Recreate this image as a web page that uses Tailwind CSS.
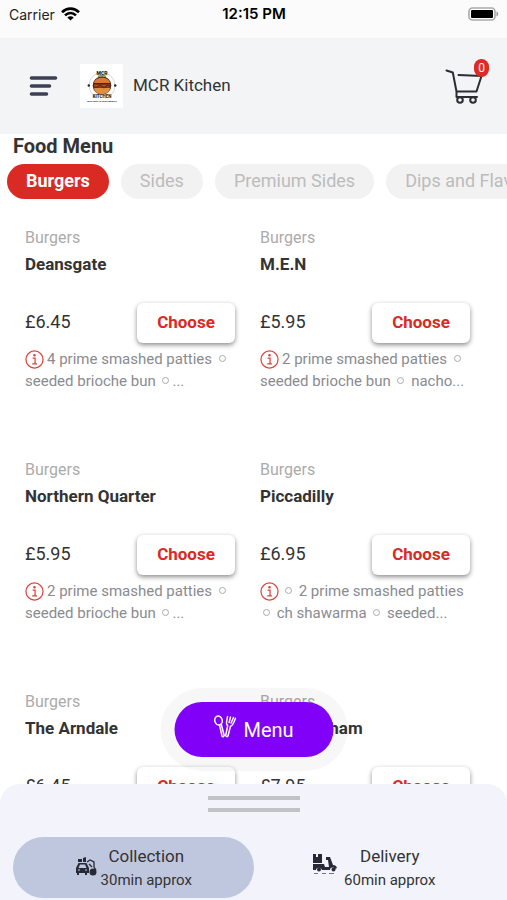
<!DOCTYPE html>
<html lang="en">
<head>
<meta charset="utf-8">
<meta name="viewport" content="width=device-width, initial-scale=1">
<title>MCR Kitchen</title>
<script src="https://cdn.jsdelivr.net/npm/@tailwindcss/browser@4"></script>
</head>
<body class="bg-white font-['Roboto','Liberation_Sans',sans-serif] text-[#333]">
<svg class="hidden" aria-hidden="true">
  <symbol id="info" viewBox="0 0 20 20"><circle cx="10" cy="10" r="9" fill="none" stroke="currentColor" stroke-width="1.3"/><circle cx="10" cy="5.6" r="1.3" fill="currentColor"/><path d="M8 8.5h2.6v6M7.6 14.6h5" fill="none" stroke="currentColor" stroke-width="1.3"/></symbol>
</svg>
<div class="flex h-screen flex-col overflow-hidden">
  <div class="grid h-[38px] shrink-0 grid-cols-3 items-center bg-[#fbfbfb] pr-2 pb-[10px] pl-[9px] font-['Inter','Roboto',sans-serif] text-[14px] text-black">
    <div class="flex items-center gap-[6px]"><span class="text-[#222]">Carrier</span>
      <svg class="h-[14px] w-[19px]" viewBox="0 0 19 14" fill="none" stroke="#000" stroke-width="2.6"><path d="M1 5.2C6 .4 13 .4 18 5.2M4 8.4c3.300-3.100 7.700-3.100 11 0"/><path d="M9.500 13.500 6.300 10.400c1.900-1.700 4.500-1.700 6.400 0z" fill="#000" stroke="none"/></svg>
    </div>
    <div class="text-center text-[15px] font-semibold">12:15 PM</div>
    <svg class="h-[14px] w-[31px] justify-self-end" viewBox="0 0 31 14"><rect x="1" y="1" width="26" height="12" rx="3.500" fill="#fff" stroke="#aaa" stroke-width="1.600"/><rect x="3" y="3" width="22" height="8" rx="1" fill="#000"/><path d="M28.500 4.500c2.300 1 2.300 4 0 5z" fill="#999"/></svg>
  </div>
  <header class="flex h-24 shrink-0 items-center bg-[#f2f4f6] pr-[18px] pl-[29px]">
    <button aria-label="Open navigation"><svg class="h-[22px] w-[30px]" viewBox="0 0 30 22" stroke="#3c3f53" stroke-width="3.600" stroke-linecap="round"><path d="M2.500 3h24M2.500 11h18M2.500 19h15"/></svg></button>
    <svg class="ml-[21px] h-11 w-[43px] bg-white" viewBox="0 0 43 44" role="img" aria-label="MCR Kitchen logo">
      <circle cx="22" cy="21.500" r="13" fill="none" stroke="#bbb" stroke-width=".6"/>
      <circle cx="8.800" cy="21.500" r="1.200" fill="#222"/><circle cx="35.200" cy="21.500" r="1.200" fill="#222"/>
      <path d="M14 29c4 5 12 5 16 0" fill="#fff" stroke="#fff" stroke-width="5"/>
      <circle cx="22" cy="21.500" r="9.300" fill="#4a2414"/>
      <path d="M14 19c1-7 15-7 16 0z" fill="#d9783a"/><path d="M14 20.500h16v3H14z" fill="#b84a20"/><path d="M14 24h16c-1 5-4 6-8 6s-7-1-8-6" fill="#e09045"/>
      <path d="M14 22.500q2 2 4 0t4 0 4 0 4 0" fill="none" stroke="#6b2c12" stroke-width="1.200"/>
      <path d="M18 12.500q4-2 8 0" fill="none" stroke="#809b35" stroke-width="1.500"/>
      <text x="22" y="10.500" text-anchor="middle" font-size="5" font-weight="900" fill="#222">MCR</text>
      <text x="22" y="34" text-anchor="middle" font-size="4.500" font-weight="900" fill="#333016">KITCHEN</text>
      <text x="22" y="38" text-anchor="middle" font-size="2.400" font-weight="700" fill="#222">Best Taste In Town Burgers</text>
    </svg>
    <h1 class="ml-[10px] flex-1 text-[17px]">MCR Kitchen</h1>
    <button class="relative" aria-label="Basket, 0 items">
      <svg class="mr-[6px] h-9 w-[38px]" viewBox="0 0 38 36" fill="none" stroke="#2c2d32" stroke-width="2" stroke-linecap="round" stroke-linejoin="round"><path d="M1.500 2.500 7.800 4.500 11.500 23.500H31.500L36.500 8M13.500 7 37 8M11.500 23.500v5.500H32"/><circle cx="15" cy="32" r="2.800"/><circle cx="28" cy="32" r="2.800"/></svg>
      <span class="absolute -top-[9px] right-0 grid h-[18px] w-[15px] place-items-center rounded-full bg-[#dc2a26] text-[12px] text-white">0</span>
    </button>
  </header>
  <main class="min-h-0 flex-1 overflow-hidden">
    <h2 class="pl-[13px] text-[20px] leading-6 font-bold">Food Menu</h2>
    <nav class="mt-[6px] flex gap-3 overflow-hidden pl-[7px] text-[18px] whitespace-nowrap text-[#bcbcbc]" aria-label="Categories">
      <button class="h-[35px] shrink-0 rounded-full bg-[#d92a23] px-[19px] pb-[2px] font-bold text-white">Burgers</button>
      <button class="h-[35px] shrink-0 rounded-full bg-[#f2f2f2] px-[19px] pb-[2px]">Sides</button>
      <button class="h-[35px] shrink-0 rounded-full bg-[#f2f2f2] px-[19px] pb-[2px]">Premium Sides</button>
      <button class="h-[35px] shrink-0 rounded-full bg-[#f2f2f2] px-[19px] pb-[2px]">Dips and Flavours</button>
    </nav>
    <div id="items" class="mt-[29px] grid grid-cols-2 gap-x-[25px] pr-[37px] pl-[25px]"></div>
  </main>
  <footer class="relative shrink-0 rounded-t-[20px] bg-[#f2f3fb] pb-[2px]">
    <div class="absolute bottom-full left-1/2 mb-[13px] -translate-x-1/2 rounded-full bg-black/3 p-[14px]">
      <button class="flex h-[55px] w-[159px] items-center justify-center gap-[7px] rounded-full bg-[#8100f7] text-[20px] text-white">
        <svg class="mb-[6px] h-[23px] w-[23px]" viewBox="0 0 23 23" fill="none" stroke="#fff" stroke-width="1.500" stroke-linecap="round" stroke-linejoin="round"><ellipse cx="5" cy="5.500" rx="3.700" ry="4.500" transform="rotate(-18 5 5.500)"/><path d="M6 10 8.500 21.200Q10 22.500 10.700 20.500L7.700 9.300M14 1.500 13 7.500c0 2.500 1.200 3 1.200 3L12.200 20.500q1 2 2.300.5L17 11.300c2-.3 3-2.300 5-8M17 2 15.600 7.500M20 2.500 17.600 8"/></svg>
        Menu
      </button>
    </div>
    <div class="mx-auto flex w-[92px] flex-col gap-2 pt-3"><div class="h-1 bg-[#c1c2c6]"></div><div class="h-1 bg-[#c1c2c6]"></div></div>
    <div class="mt-[25px] grid grid-cols-2 px-[13px]">
      <button class="flex h-[61px] items-center justify-center gap-1 rounded-full bg-[#bfc7df]">
        <svg class="mb-1 h-5 w-[22px]" viewBox="0 0 22 20" fill="#272936"><path d="M3 3h4v3H3zM8 2l3-1v5H8z"/><path d="M3.500 7h8L14 12v5h-2v2h-2v-2H4v2H2v-2H1v-5zM5 8.500 3.500 12h8L10 8.500z" fill-rule="evenodd"/><path d="M3 14h2M10 14h2" stroke="#c0c8e0"/><path d="m12 6 3-2 4 2v5l2 3M14 8l3 3" fill="none" stroke="#272936" stroke-width="1.300"/><circle cx="18" cy="16" r="3.500"/></svg>
        <span class="flex flex-col text-center"><span class="text-[17px] leading-6">Collection</span><span class="text-[15px] leading-6">30min approx</span></span>
      </button>
      <button class="flex h-[61px] items-center justify-center gap-[6px] rounded-full">
        <svg class="mb-2 h-[22px] w-[26px]" viewBox="0 0 26 22" fill="#272936"><path d="M1 1h3v3h2V1h4v9H1z"/><path d="M1 11h11l1 3h4l-1-7h-2V4h4l3 8c2 0 3.500 1 4 3l-2 1c-1-2-5-2-5 1H10c-1-3-6-3-6 0H1z"/><circle cx="7" cy="16.500" r="2"/><circle cx="21.500" cy="16.500" r="2"/><path d="M2 20.500h4M10 20.500h4M17 20.500h5" stroke="#777" stroke-width="1.200"/></svg>
        <span class="flex flex-col text-center"><span class="text-[17px] leading-6">Delivery</span><span class="text-[15px] leading-6">60min approx</span></span>
      </button>
    </div>
  </footer>
</div>
<script>
const items = [
  ["Deansgate", "£6.45", "4 prime smashed patties *", "seeded brioche bun *..."],
  ["M.E.N", "£5.95", "2 prime smashed patties *", "seeded brioche bun * nacho..."],
  ["Northern Quarter", "£5.95", "2 prime smashed patties *", "seeded brioche bun *..."],
  ["Piccadilly", "£6.95", "* 2 prime smashed patties", "* ch shawarma * seeded..."],
  ["The Arndale", "£6.45", "", ""],
  ["West Durham", "£7.95", "", ""]
];
const dots = s => s.replace(/\*/g, '<span class="mx-[3px] mb-[3px] inline-block size-[7px] rounded-full border border-[#aaa] align-middle"></span>');
document.getElementById("items").innerHTML = items.map(([name, price, a, b]) => `
  <article class="h-[232px] min-w-0">
    <p class="text-[16px] leading-5 text-[#ababab]">Burgers</p>
    <h3 class="mt-1 text-[17px] leading-6 font-bold">${name}</h3>
    <div class="mt-[27px] flex items-start justify-between">
      <span class="text-[18px] leading-[38px]">${price}</span>
      <button class="h-10 w-[98px] rounded-md bg-white text-[17px] font-bold text-[#d92a23] shadow-[0_2px_5px_rgba(0,0,0,0.45)]">Choose</button>
    </div>
    <p class="mt-[6px] text-[15px] leading-[21px] whitespace-nowrap text-[#8a8b90]"><svg class="mr-[3px] mb-[2px] inline-block size-[19px] align-middle text-[#d9443c]"><use href="#info"/></svg>${dots(a)}<br>${dots(b)}</p>
  </article>`).join("");
</script>
</body>
</html>
